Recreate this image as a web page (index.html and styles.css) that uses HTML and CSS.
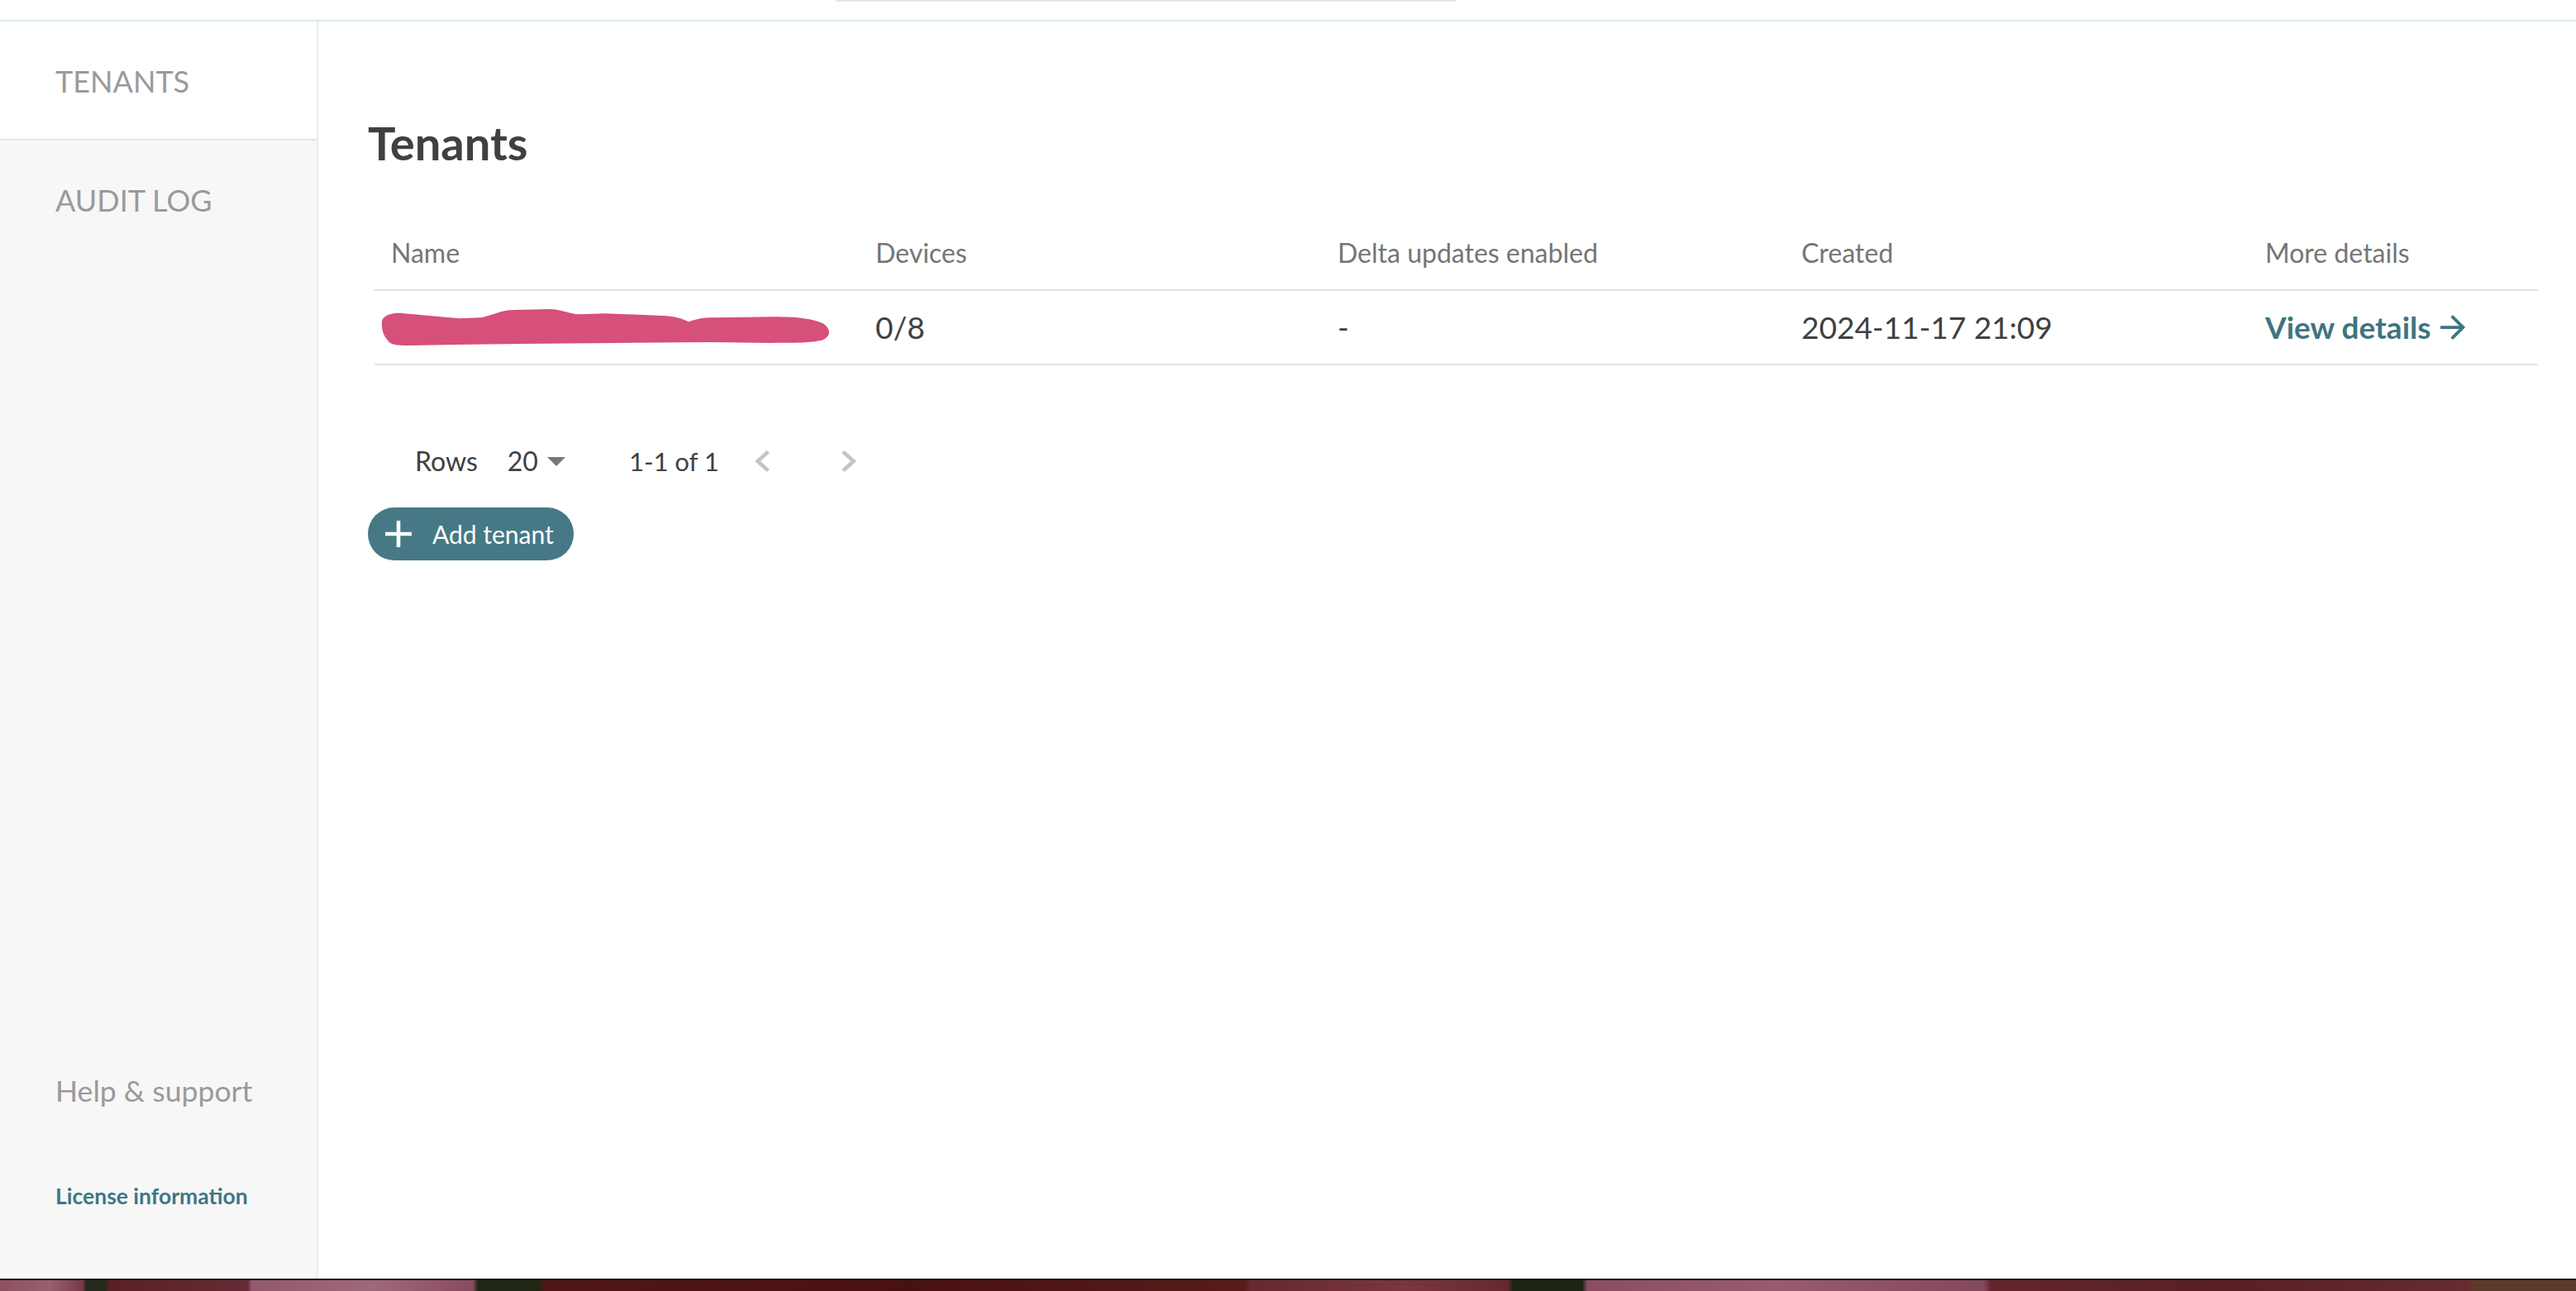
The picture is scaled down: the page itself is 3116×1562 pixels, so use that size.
FILE: index.html
```html
<!DOCTYPE html>
<html lang="en">
<head>
<meta charset="utf-8">
<title>Tenants</title>
<link rel="stylesheet" href="styles.css">
</head>
<body>
<header class="topbar">
  <div class="topbar-search"></div>
</header>
<div class="app">
  <aside class="sidebar">
    <nav class="nav">
      <a class="nav-item active" href="#">Tenants</a>
      <a class="nav-item" href="#">Audit log</a>
    </nav>
    <div class="sidebar-footer">
      <a class="help" href="#">Help &amp; support</a>
      <a class="license" href="#">License information</a>
    </div>
  </aside>
  <main class="main">
    <h1 class="title">Tenants</h1>
    <table class="tenants">
      <colgroup>
        <col class="c-name"><col class="c-devices"><col class="c-delta"><col class="c-created"><col class="c-more">
      </colgroup>
      <thead>
        <tr>
          <th>Name</th>
          <th>Devices</th>
          <th>Delta updates enabled</th>
          <th>Created</th>
          <th>More details</th>
        </tr>
      </thead>
      <tbody>
        <tr>
          <td class="name-cell">
            <svg class="redact" width="544" height="46" viewBox="0 0 541 45" preserveAspectRatio="none" aria-hidden="true">
              <path d="M1,16 C2,6 20,5 27,6 L94,12 L120,11 C135,8 145,2 160,2 L204,1 C220,2 228,7 237,7 L270,6 L344,9 C355,10 362,12 370,16 C378,13 385,11 400,11 L473,10 C505,10 520,13 532,18 C542,25 541,34 530,38 C515,41 503,41 470,41 L396,40 L281,41 L167,42 L90,43 L29,44 C15,44 10,42 8,38 C4,34 0,26 1,16 Z" fill="#d65079"/>
            </svg>
          </td>
          <td>0/8</td>
          <td>-</td>
          <td>2024-11-17 21:09</td>
          <td>
            <a class="view-link" href="#">View details
              <svg width="30" height="30" viewBox="4 4 16 16" aria-hidden="true"><path d="M12 4l-1.41 1.41L16.17 11H4v2h12.17l-5.58 5.59L12 20l8-8z" fill="currentColor"/></svg>
            </a>
          </td>
        </tr>
      </tbody>
    </table>
    <div class="pagination">
      <span class="rows-label">Rows</span>
      <span class="rows-select">20
        <svg width="22" height="11" viewBox="7 10 10 5" aria-hidden="true"><path d="M7 10l5 5 5-5z" fill="#777"/></svg>
      </span>
      <span class="range">1-1 of 1</span>
      <button class="page-btn prev" aria-label="Previous page">
        <svg width="18" height="26" viewBox="8 6 7.41 12" preserveAspectRatio="none"><path d="M15.41 7.41L14 6l-6 6 6 6 1.41-1.41L10.83 12z" fill="#c4c4c4"/></svg>
      </button>
      <button class="page-btn next" aria-label="Next page">
        <svg width="18" height="26" viewBox="8.59 6 7.41 12" preserveAspectRatio="none"><path d="M10 6L8.59 7.41 13.17 12l-4.58 4.59L10 18l6-6z" fill="#c4c4c4"/></svg>
      </button>
    </div>
    <button class="add-btn">
      <svg width="32" height="32" viewBox="5 5 14 14" aria-hidden="true"><path d="M19 13h-6v6h-2v-6H5v-2h6V5h2v6h6v2z" fill="#fff"/></svg>
      <span>Add tenant</span>
    </button>
  </main>
</div>
<div class="wallpaper"></div>
</body>
</html>
```

FILE: styles.css
```css
* { box-sizing: border-box; }

html, body {
  margin: 0;
  padding: 0;
}

body {
  height: 1562px;
  overflow: hidden;
  display: flex;
  flex-direction: column;
  background: #ffffff;
  font-family: Lato, "Noto Sans", "Liberation Sans", sans-serif;
  color: #404040;
}

/* top bar */
.topbar {
  flex: none;
  height: 26px;
  border-bottom: 2px solid #dbe9e9;
}

.topbar-search {
  margin-left: 1011px;
  width: 750px;
  height: 2px;
  background: #e6e6e6;
}

.app {
  flex: 1;
  display: flex;
  min-height: 0;
}

/* sidebar */
.sidebar {
  flex: none;
  width: 385px;
  background: #f7f7f7;
  border-right: 2px solid #e6efef;
  display: flex;
  flex-direction: column;
}

.nav {
  display: flex;
  flex-direction: column;
}

.nav-item {
  display: block;
  padding: 50px 0 48px 67px;
  font-size: 36px;
  line-height: 44px;
  color: #9a9a9a;
  text-transform: uppercase;
  text-decoration: none;
}

.nav-item.active {
  background: #ffffff;
  border-bottom: 2px solid #dbe9e9;
}

.sidebar-footer {
  margin-top: auto;
  padding: 0 0 83px 67px;
  display: flex;
  flex-direction: column;
}

.help {
  font-size: 35.6px;
  line-height: 44px;
  color: #9a9a9a;
  text-decoration: none;
}

.license {
  margin-top: 88px;
  font-size: 26.5px;
  line-height: 34px;
  font-weight: 700;
  color: #3d7784;
  text-decoration: none;
}

/* main */
.main {
  flex: 1;
  min-width: 0;
  padding: 113px 46px 0 60px;
}

.title {
  margin: 0;
  font-size: 56px;
  line-height: 68px;
  font-weight: 700;
  color: #404040;
}

.tenants {
  margin: 57px 0 0 8px;
  width: 2617px;
  table-layout: fixed;
  border-collapse: separate;
  border-spacing: 0;
}

.c-name { width: 586px; }
.c-devices { width: 559px; }
.c-delta { width: 561px; }
.c-created { width: 561px; }
.c-more { width: 350px; }

.tenants th {
  text-align: left;
  font-weight: 400;
  font-size: 32px;
  line-height: 36px;
  color: #757575;
  padding: 24px 20px 26px;
  border-bottom: 2px solid #e1e1e1;
  white-space: nowrap;
}

.tenants td {
  font-size: 37px;
  line-height: 44px;
  color: #404040;
  padding: 22px 20px;
  border-bottom: 2px solid #e1e1e1;
  white-space: nowrap;
}

.redact {
  display: block;
  margin: -2px 0 -2px -12px;
}

.view-link {
  display: inline-flex;
  align-items: center;
  gap: 11px;
  color: #3e7581;
  font-weight: 700;
  text-decoration: none;
}

.view-link svg { display: block; }

/* pagination */
.pagination {
  display: flex;
  align-items: center;
  height: 52px;
  margin: 90px 0 0 57px;
  font-size: 32px;
  line-height: 36px;
  color: #404040;
}

.rows-select {
  display: inline-flex;
  align-items: center;
  margin-left: 36px;
}

.rows-select svg {
  display: block;
  margin-left: 11px;
}

.range {
  margin-left: 77px;
  font-size: 31px;
}

.page-btn {
  display: flex;
  align-items: center;
  justify-content: center;
  padding: 0;
  border: none;
  background: transparent;
}

.page-btn svg { display: block; }

.page-btn.prev { margin-left: 43px; }
.page-btn.next { margin-left: 87px; }

/* add button */
.add-btn {
  display: flex;
  align-items: center;
  gap: 25px;
  width: max-content;
  height: 64px;
  margin-top: 30px;
  padding: 0 24px 0 21px;
  border: none;
  border-radius: 32px;
  background: #467985;
  color: #ffffff;
  font-family: inherit;
  font-size: 30px;
  line-height: 36px;
}

.add-btn svg { display: block; }

/* desktop wallpaper strip peeking below the window */
.wallpaper {
  flex: none;
  height: 15px;
  border-top: 2px solid #141010;
  background: linear-gradient(90deg,
    #8d5060 0px, #9a6070 60px, #7a3848 100px,
    #25281a 104px, #25281a 128px,
    #5c1e25 132px, #6a2a35 300px,
    #95586c 304px, #a0687c 450px, #8a4a5e 572px,
    #1f2614 578px, #1f2614 652px,
    #521515 658px, #4a1010 1100px, #5a1a1a 1506px,
    #6b2730 1512px, #7a3540 1700px, #6b2730 1824px,
    #1c2513 1830px, #1c2513 1914px,
    #8c4d62 1920px, #9a5a70 2150px, #85485c 2400px,
    #66242c 2408px, #5a1e26 2700px, #6a2a32 2986px,
    #5e3a2a 2992px, #5e3a2a 3116px);
}
```
